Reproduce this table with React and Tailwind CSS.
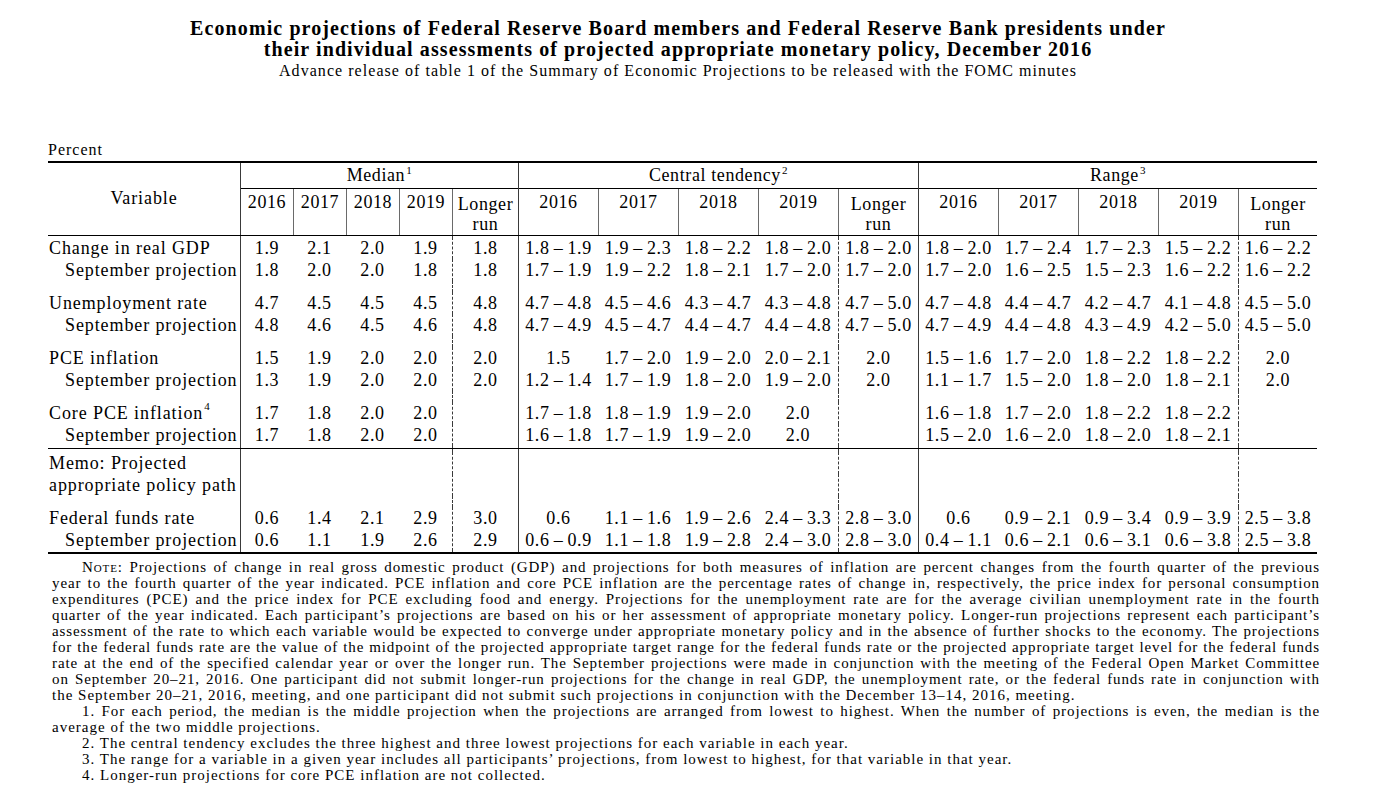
import React from 'react';

const WIDTHS = [
  'w-[192px]', 'w-[53px]', 'w-[53px]', 'w-[53px]', 'w-[53px]', 'w-[66px]',
  'w-[80px]', 'w-[80px]', 'w-[80px]', 'w-[80px]', 'w-[80px]',
  'w-[80px]', 'w-[80px]', 'w-[80px]', 'w-[80px]', 'w-[79px]',
];

const YEARS = ['2016', '2017', '2018', '2019'];

const r = (a, b) => `${a}\u2009\u2013\u2009${b}`;

const rows = [
  {
    label: 'Change in real GDP',
    vals: ['1.9', '2.1', '2.0', '1.9', '1.8', r('1.8', '1.9'), r('1.9', '2.3'), r('1.8', '2.2'), r('1.8', '2.0'), r('1.8', '2.0'), r('1.8', '2.0'), r('1.7', '2.4'), r('1.7', '2.3'), r('1.5', '2.2'), r('1.6', '2.2')],
  },
  {
    label: 'September projection', indent: true,
    vals: ['1.8', '2.0', '2.0', '1.8', '1.8', r('1.7', '1.9'), r('1.9', '2.2'), r('1.8', '2.1'), r('1.7', '2.0'), r('1.7', '2.0'), r('1.7', '2.0'), r('1.6', '2.5'), r('1.5', '2.3'), r('1.6', '2.2'), r('1.6', '2.2')],
  },
  { spacer: 'h-[11px]' },
  {
    label: 'Unemployment rate',
    vals: ['4.7', '4.5', '4.5', '4.5', '4.8', r('4.7', '4.8'), r('4.5', '4.6'), r('4.3', '4.7'), r('4.3', '4.8'), r('4.7', '5.0'), r('4.7', '4.8'), r('4.4', '4.7'), r('4.2', '4.7'), r('4.1', '4.8'), r('4.5', '5.0')],
  },
  {
    label: 'September projection', indent: true,
    vals: ['4.8', '4.6', '4.5', '4.6', '4.8', r('4.7', '4.9'), r('4.5', '4.7'), r('4.4', '4.7'), r('4.4', '4.8'), r('4.7', '5.0'), r('4.7', '4.9'), r('4.4', '4.8'), r('4.3', '4.9'), r('4.2', '5.0'), r('4.5', '5.0')],
  },
  { spacer: 'h-[11px]' },
  {
    label: 'PCE inflation',
    vals: ['1.5', '1.9', '2.0', '2.0', '2.0', '1.5', r('1.7', '2.0'), r('1.9', '2.0'), r('2.0', '2.1'), '2.0', r('1.5', '1.6'), r('1.7', '2.0'), r('1.8', '2.2'), r('1.8', '2.2'), '2.0'],
  },
  {
    label: 'September projection', indent: true,
    vals: ['1.3', '1.9', '2.0', '2.0', '2.0', r('1.2', '1.4'), r('1.7', '1.9'), r('1.8', '2.0'), r('1.9', '2.0'), '2.0', r('1.1', '1.7'), r('1.5', '2.0'), r('1.8', '2.0'), r('1.8', '2.1'), '2.0'],
  },
  { spacer: 'h-[11px]' },
  {
    label: 'Core PCE inflation', sup: '4',
    vals: ['1.7', '1.8', '2.0', '2.0', '', r('1.7', '1.8'), r('1.8', '1.9'), r('1.9', '2.0'), '2.0', '', r('1.6', '1.8'), r('1.7', '2.0'), r('1.8', '2.2'), r('1.8', '2.2'), ''],
  },
  {
    label: 'September projection', indent: true,
    vals: ['1.7', '1.8', '2.0', '2.0', '', r('1.6', '1.8'), r('1.7', '1.9'), r('1.9', '2.0'), '2.0', '', r('1.5', '2.0'), r('1.6', '2.0'), r('1.8', '2.0'), r('1.8', '2.1'), ''],
  },
  { spacer: 'h-[3px] border-b border-black' },
  { spacer: 'h-[3px]' },
  { label: 'Memo: Projected', vals: [] },
  { label: 'appropriate policy path', vals: [] },
  { spacer: 'h-[11px]' },
  {
    label: 'Federal funds rate',
    vals: ['0.6', '1.4', '2.1', '2.9', '3.0', '0.6', r('1.1', '1.6'), r('1.9', '2.6'), r('2.4', '3.3'), r('2.8', '3.0'), '0.6', r('0.9', '2.1'), r('0.9', '3.4'), r('0.9', '3.9'), r('2.5', '3.8')],
  },
  {
    label: 'September projection', indent: true,
    vals: ['0.6', '1.1', '1.9', '2.6', '2.9', r('0.6', '0.9'), r('1.1', '1.8'), r('1.9', '2.8'), r('2.4', '3.0'), r('2.8', '3.0'), r('0.4', '1.1'), r('0.6', '2.1'), r('0.6', '3.1'), r('0.6', '3.8'), r('2.5', '3.8')],
  },
  { spacer: 'h-[1px]' },
];

function cellBorder(i) {
  if (i === 1 || i === 6 || i === 11) return 'border-l border-[#3a3a3a]';
  if (i === 5 || i === 10 || i === 15) return 'border-l border-dashed border-[#3a3a3a]';
  return '';
}

function Row({ row }) {
  if (row.spacer) {
    return (
      <div className={`flex ${row.spacer}`}>
        {WIDTHS.map((w, i) => (
          <div key={i} className={`${w} shrink-0 h-full ${cellBorder(i)}`} />
        ))}
      </div>
    );
  }
  return (
    <div className="flex h-[22px]">
      <div className={`${WIDTHS[0]} shrink-0 flex items-center whitespace-nowrap tracking-[0.9px] ${row.indent ? 'pl-[17px]' : 'pl-[1px]'}`}>
        {row.label}
        {row.sup && <sup className="text-[11px] relative -top-[7px] ml-[1px]">{row.sup}</sup>}
      </div>
      {WIDTHS.slice(1).map((w, j) => (
        <div key={j} className={`${w} shrink-0 flex items-center justify-center whitespace-nowrap ${cellBorder(j + 1)}`}>
          {row.vals[j] || ''}
        </div>
      ))}
    </div>
  );
}

function Group({ title, sup, widths, first }) {
  return (
    <div className="flex flex-col border-l border-[#3a3a3a]">
      <div className="h-[26px] border-b border-black flex items-center justify-center">
        <span>
          {title}
          <sup className="text-[11px] relative -top-[7px] ml-[1px]">{sup}</sup>
        </span>
      </div>
      <div className="flex h-[46px]">
        {widths.map((w, i) => {
          const label = i < 4 ? YEARS[i] : null;
          return (
            <div
              key={i}
              className={`${i === 0 ? first : w} shrink-0 flex flex-col items-center pt-[2px] leading-[22px] ${i > 0 ? 'border-l border-[#6a6a6a]' : ''}`}
            >
              {label ? (
                <span>{label}</span>
              ) : (
                <>
                  <span className="pt-[2px]">Longer</span>
                  <span className="-mt-[2px]">run</span>
                </>
              )}
            </div>
          );
        })}
      </div>
    </div>
  );
}

const noteLines = [
  { t: (<><span className="[font-variant-caps:small-caps]">Note:</span> Projections of change in real gross domestic product (GDP) and projections for both measures of inflation are percent changes from the fourth quarter of the previous</>), indent: true },
  { t: 'year to the fourth quarter of the year indicated. PCE inflation and core PCE inflation are the percentage rates of change in, respectively, the price index for personal consumption' },
  { t: 'expenditures (PCE) and the price index for PCE excluding food and energy. Projections for the unemployment rate are for the average civilian unemployment rate in the fourth' },
  { t: 'quarter of the year indicated. Each participant\u2019s projections are based on his or her assessment of appropriate monetary policy. Longer-run projections represent each participant\u2019s' },
  { t: 'assessment of the rate to which each variable would be expected to converge under appropriate monetary policy and in the absence of further shocks to the economy. The projections' },
  { t: 'for the federal funds rate are the value of the midpoint of the projected appropriate target range for the federal funds rate or the projected appropriate target level for the federal funds' },
  { t: 'rate at the end of the specified calendar year or over the longer run. The September projections were made in conjunction with the meeting of the Federal Open Market Committee' },
  { t: 'on September 20\u201321, 2016. One participant did not submit longer-run projections for the change in real GDP, the unemployment rate, or the federal funds rate in conjunction with' },
  { t: 'the September 20\u201321, 2016, meeting, and one participant did not submit such projections in conjunction with the December 13\u201314, 2016, meeting.', last: true },
  { t: '1. For each period, the median is the middle projection when the projections are arranged from lowest to highest. When the number of projections is even, the median is the', indent: true },
  { t: 'average of the two middle projections.', last: true },
  { t: '2. The central tendency excludes the three highest and three lowest projections for each variable in each year.', indent: true, last: true },
  { t: '3. The range for a variable in a given year includes all participants\u2019 projections, from lowest to highest, for that variable in that year.', indent: true, last: true },
  { t: '4. Longer-run projections for core PCE inflation are not collected.', indent: true, last: true },
];

export default function App() {
  return (
    <div className="w-[1392px] h-[794px] bg-white text-black overflow-hidden font-['Liberation_Serif',serif]">
      <div className="w-[1356px] pt-[18px] text-center">
        <div className="font-bold text-[20px] leading-[21px] tracking-[1.1px]">
          Economic projections of Federal Reserve Board members and Federal Reserve Bank presidents under
        </div>
        <div className="font-bold text-[20px] leading-[21px] tracking-[1.1px]">
          their individual assessments of projected appropriate monetary policy, December 2016
        </div>
        <div className="text-[16px] leading-[21px] tracking-[1.05px]">
          Advance release of table 1 of the Summary of Economic Projections to be released with the FOMC minutes
        </div>
      </div>

      <div className="ml-[48px] w-[1269px] mt-[61px] text-[18px] tracking-[0.6px]">
        <div className="text-[16px] leading-[16px] tracking-[1px] mb-[3px]">Percent</div>
        <div className="border-t-2 border-b-2 border-black">
          <div className="flex border-b border-black">
            <div className="w-[192px] shrink-0 flex items-center justify-center pb-[1px] tracking-[0.9px]">Variable</div>
            <Group title="Median" sup="1" widths={['w-[53px]', 'w-[53px]', 'w-[53px]', 'w-[53px]', 'w-[66px]']} first="w-[52px]" />
            <Group title="Central tendency" sup="2" widths={['w-[80px]', 'w-[80px]', 'w-[80px]', 'w-[80px]', 'w-[80px]']} first="w-[79px]" />
            <Group title="Range" sup="3" widths={['w-[80px]', 'w-[80px]', 'w-[80px]', 'w-[80px]', 'w-[79px]']} first="w-[79px]" />
          </div>
          <Row row={{ spacer: 'h-[1px]' }} />
          {rows.map((row, i) => (
            <Row key={i} row={row} />
          ))}
        </div>
      </div>

      <div className="ml-[52px] w-[1268px] mt-[5px] text-[15px] leading-[16px]">
        {noteLines.map((l, i) => (
          <div
            key={i}
            className={`whitespace-nowrap ${l.indent ? 'pl-[30px]' : ''} ${l.last ? 'text-left tracking-[1px]' : 'text-justify [text-align-last:justify] tracking-[0.9px]'}`}
          >
            {l.t}
          </div>
        ))}
      </div>
    </div>
  );
}
